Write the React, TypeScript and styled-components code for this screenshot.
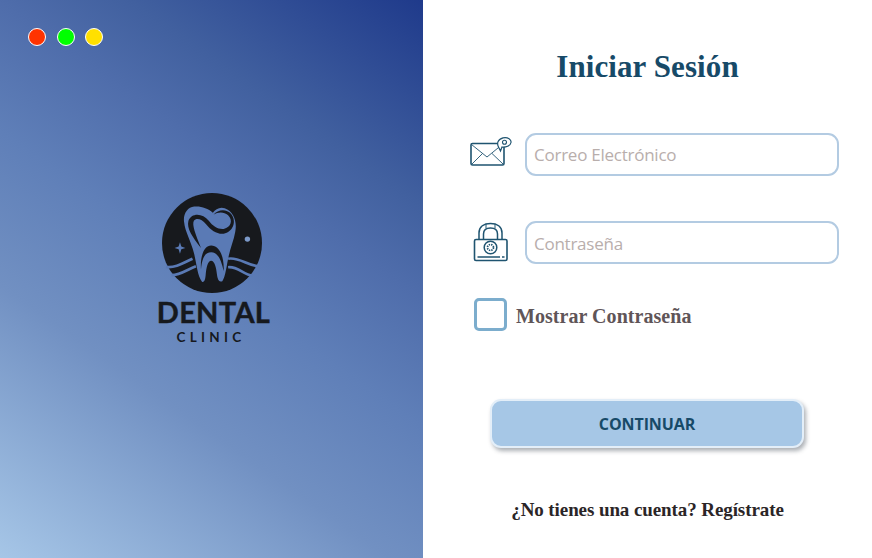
import React from "react";
import styled, { createGlobalStyle } from "styled-components";

const Global = createGlobalStyle`
  html, body { margin: 0; padding: 0; background: #fff; }
  #root { width: 872px; height: 558px; overflow: hidden; }
`;

const Page = styled.div`
  display: flex;
  width: 872px;
  height: 558px;
`;

const Side = styled.aside`
  position: relative;
  width: 423px;
  height: 558px;
  flex: none;
  display: flex;
  align-items: center;
  justify-content: center;
  background: linear-gradient(35deg, #a6c6e7 0%, #7190c2 32%, #5f7fb8 50%, #4f6dab 65%, #41609f 76%, #1f3a8b 100%);
`;

const Dots = styled.div`
  position: absolute;
  top: 28px;
  left: 28px;
  display: flex;
  gap: 10.5px;
`;

const Dot = styled.span<{ $color: string }>`
  width: 18px;
  height: 18px;
  box-sizing: border-box;
  border-radius: 50%;
  border: 1.5px solid #fff;
  background: ${(p) => p.$color};
`;

const Logo = styled.div`
  display: flex;
  flex-direction: column;
  align-items: center;
  width: 120px;
  margin-top: -21px;
  color: #16191e;
  font-family: Lato, "Liberation Sans", sans-serif;
`;

const LogoName = styled.div`
  font-size: 29px;
  line-height: 24px;
  height: 24px;
  font-weight: 700;
  letter-spacing: 0.3px;
  margin-top: 7px;
  margin-left: 4px;
  white-space: nowrap;
  -webkit-text-stroke: 0.4px #16191e;
`;

const LogoSub = styled.div`
  font-size: 13.5px;
  line-height: 14px;
  height: 14px;
  font-weight: 700;
  letter-spacing: 4.3px;
  margin-top: 6px;
  margin-left: -1px;
`;

const Main = styled.main`
  flex: 1;
  height: 558px;
  box-sizing: border-box;
  padding: 47px 33px 0 47px;
  display: flex;
  flex-direction: column;
  background: #fff;
`;

const Title = styled.h1`
  margin: 0 -33px 0 -47px;
  font-family: "Liberation Serif", serif;
  font-size: 31px;
  line-height: 40px;
  font-weight: 700;
  letter-spacing: 0.1px;
  color: #174a68;
  text-align: center;
`;

const Field = styled.div<{ $top: number }>`
  display: flex;
  align-items: center;
  justify-content: space-between;
  margin-top: ${(p) => p.$top}px;
`;

const IconBox = styled.div`
  width: 44px;
  height: 43px;
  flex: none;
  display: flex;
`;

const Input = styled.input<{ $shift?: number }>`
  width: 314px;
  height: 43px;
  box-sizing: border-box;
  margin-left: 11px;
  padding: ${(p) => p.$shift ?? 0}px 7px 0;
  border: 2px solid #b3cbe2;
  border-radius: 11px;
  outline: none;
  background: #fff;
  font-family: "Open Sans", "Noto Sans", sans-serif;
  font-size: 17px;
  letter-spacing: -0.25px;
  color: #333;
  &::placeholder { color: #b8aeac; opacity: 1; }
`;

const CheckRow = styled.label`
  display: flex;
  align-items: center;
  gap: 9px;
  margin-top: 34px;
  margin-left: 4px;
`;

const CheckBox = styled.span`
  width: 33px;
  height: 33px;
  box-sizing: border-box;
  border: 3px solid #7cadcd;
  border-radius: 5px;
  background: #fff;
`;

const CheckLabel = styled.span`
  margin-top: 3px;
  font-family: "Liberation Serif", serif;
  font-weight: 700;
  font-size: 20px;
  letter-spacing: 0.05px;
  color: #5f5558;
`;

const Button = styled.button`
  align-self: flex-start;
  width: 314px;
  height: 49px;
  margin-top: 68px;
  margin-left: 20px;
  border: 2px solid #e3eef8;
  border-radius: 11px;
  background: #a6c7e6;
  box-shadow: 2px 3px 4px rgba(70, 80, 90, 0.45);
  font-family: "Open Sans", "Noto Sans", sans-serif;
  font-size: 16px;
  font-weight: 700;
  letter-spacing: -0.1px;
  color: #174a68;
`;

const Register = styled.p`
  margin: 50px -33px 0 -47px;
  font-family: "Liberation Serif", serif;
  font-weight: 700;
  font-size: 19px;
  line-height: 24px;
  letter-spacing: -0.09px;
  color: #2b2527;
  text-align: center;
`;

const stroke = "#1f5470";
const dark = "#17191d";
const blue = "#5a7ab5";

const MailIcon = () => (
  <svg width="44" height="43" viewBox="0 0 44 43" fill="none" stroke={stroke}>
    <rect x="1" y="10.500" width="33" height="21.500" rx="1.500" strokeWidth="1.600" />
    <path d="M1.500 11.500 L17 24 L31 12.500 M2 31 L12.500 20.500 M33 31 L22 20.500" strokeWidth="0.900" />
    <path
      d="M28.500 14 C27 11 27 6.500 33 4.800 C38 3.800 41.500 6.500 41 9.500 C40.500 13 35.500 14.500 32 14 L30.500 18 Z"
      fill="#fff"
      strokeWidth="1.200"
    />
    <circle cx="34.500" cy="9.300" r="2" strokeWidth="1.100" />
  </svg>
);

const LockIcon = () => (
  <svg width="44" height="43" viewBox="0 0 44 43" fill="none" stroke={stroke} strokeWidth="1.500">
    <path d="M9 18 V12 C9 5.500 14 2.500 20.500 2.500 C27 2.500 32 5.500 32 12 V18" />
    <path d="M13.500 18 V13 C13.500 9 16.500 7 20.500 7 C24.500 7 27.500 9 27.500 13 V18" />
    <path d="M16 3 V7.500 M25 3 V7.500" strokeWidth="1" />
    <rect x="4.500" y="18.500" width="32.500" height="21" rx="1.500" strokeWidth="1.600" />
    <circle cx="20.500" cy="26.500" r="6.300" />
    <circle cx="20.500" cy="26.500" r="3" strokeDasharray="1.400 1" strokeWidth="1.700" />
    <path d="M7.500 36 H30 M32 36 H34.500" strokeWidth="1.300" />
  </svg>
);

const ToothLogo = () => (
  <svg width="100" height="100" viewBox="10 10 295 295">
    <circle cx="157.500" cy="157.500" r="147.500" fill={dark} />
    <path
      fill={blue}
      d="M105 50 C85 52 72 72 75 95 C78 125 95 150 105 190 C112 220 115 255 128 272 C135 275 138 265 139 250 C141 230 145 210 155 210 C165 210 170 230 172 250 C174 265 178 275 188 270 C198 255 200 225 207 195 C212 170 222 150 226 125 C232 95 222 65 195 55 C180 50 168 58 160 68 C145 55 125 48 105 50 Z"
    />
    <path
      fill={dark}
      d="M125 172 C100 140 82 115 88 92 C96 68 130 68 148 92 C160 108 176 118 192 116 C214 112 220 90 205 76 C192 64 175 66 162 74 C175 58 200 56 214 72 C232 95 218 126 192 130 C172 132 155 120 140 102 C128 88 112 82 104 92 C98 104 108 130 125 172 Z"
    />
    <path
      fill={dark}
      d="M125 235 C122 195 135 165 155 165 C178 165 194 195 192 240 C186 215 178 185 155 185 C135 185 128 205 125 235 Z"
    />
    <g fill="none" stroke={blue} strokeWidth="8">
      <path d="M22 228 C50 232 75 215 100 204" />
      <path d="M38 252 C65 252 85 235 110 226" />
      <path d="M205 204 C235 198 260 222 292 226" />
      <path d="M205 229 C235 226 250 252 278 254" />
    </g>
    <path fill={blue} d="M63 155 L67 168 L79 172 L67 176 L63 189 L59 176 L47 172 L59 168 Z" />
    <circle cx="262" cy="146" r="8" fill="#7c99c9" />
  </svg>
);

export default function App() {
  return (
    <Page>
      <Global />
      <Side>
        <Dots>
          <Dot $color="#ff3300" />
          <Dot $color="#00ff00" />
          <Dot $color="#ffe000" />
        </Dots>
        <Logo>
          <ToothLogo />
          <LogoName>DENTAL</LogoName>
          <LogoSub>CLINIC</LogoSub>
        </Logo>
      </Side>
      <Main>
        <Title>Iniciar Sesión</Title>
        <Field $top={46}>
          <IconBox><MailIcon /></IconBox>
          <Input placeholder="Correo Electrónico" />
        </Field>
        <Field $top={45}>
          <IconBox><LockIcon /></IconBox>
          <Input $shift={2} placeholder="Contraseña" />
        </Field>
        <CheckRow>
          <CheckBox />
          <CheckLabel>Mostrar Contraseña</CheckLabel>
        </CheckRow>
        <Button>CONTINUAR</Button>
        <Register>¿No tienes una cuenta? Regístrate</Register>
      </Main>
    </Page>
  );
}
